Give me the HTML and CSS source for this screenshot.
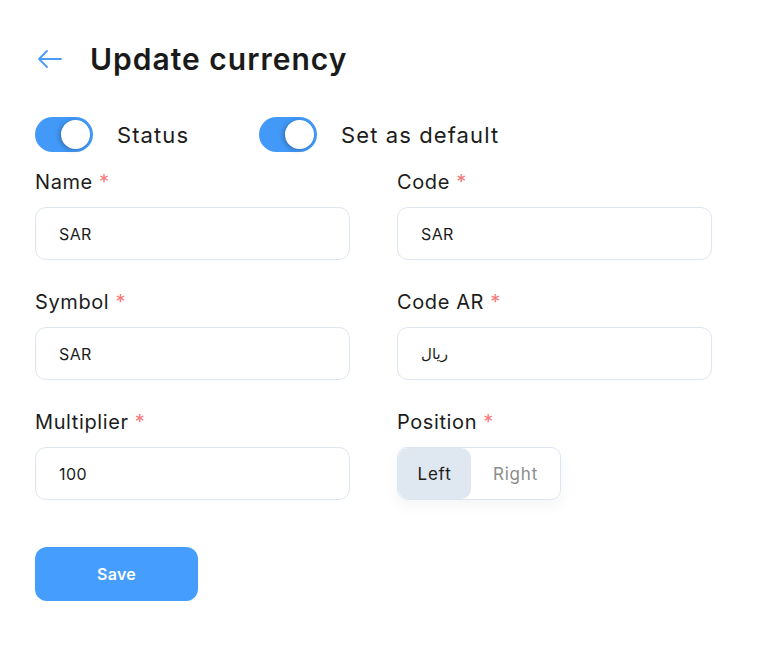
FILE: index.html
```html
<!DOCTYPE html>
<html>
<head>
<meta charset="utf-8">
<link rel="stylesheet" href="styles.css">
</head>
<body>
<div class="page">
  <div class="header">
    <svg class="back" width="26" height="20" viewBox="0 0 26 20"><path d="M24 10H2M10 2L2 10l8 8" fill="none" stroke="#4a9cf6" stroke-width="1.8" stroke-linecap="round" stroke-linejoin="round"/></svg>
    <h1 class="title">Update currency</h1>
  </div>
  <div class="toggles">
    <div class="toggle-item"><span class="switch"><span class="knob"></span></span><span class="toggle-label">Status</span></div>
    <div class="toggle-item"><span class="switch"><span class="knob"></span></span><span class="toggle-label">Set as default</span></div>
  </div>
  <div class="grid">
    <div class="field"><label class="label">Name <span class="req">*</span></label><div class="input">SAR</div></div>
    <div class="field"><label class="label">Code <span class="req">*</span></label><div class="input">SAR</div></div>
    <div class="field"><label class="label">Symbol <span class="req">*</span></label><div class="input">SAR</div></div>
    <div class="field"><label class="label">Code AR <span class="req">*</span></label><div class="input arabic">ريال</div></div>
    <div class="field"><label class="label">Multiplier <span class="req">*</span></label><div class="input">100</div></div>
    <div class="field"><label class="label">Position <span class="req">*</span></label>
      <div class="segment"><span class="seg active">Left</span><span class="seg">Right</span></div>
    </div>
  </div>
  <button class="save">Save</button>
</div>
</body>
</html>
```
FILE: styles.css
```css
* { box-sizing: border-box; }
body { margin: 0; background: #fff; font-family: "Inter", "Noto Sans", sans-serif; color: #1c1c1c; }
.page { padding: 41px 35px 0 35px; width: 784px; }
.header { display: flex; align-items: center; height: 36px; }
.back { margin-left: 2px; margin-right: 27px; }
.title { margin: 0; font-size: 30px; font-weight: 600; line-height: 36px; letter-spacing: 1px; color: #1a1a1a; }
.toggles { display: flex; gap: 0; margin-top: 40px; height: 35px; }
.toggle-item { display: flex; align-items: center; width: 224px; }
.switch { width: 58px; height: 35px; border-radius: 18px; background: #4299f7; position: relative; display: inline-block; flex: none; }
.knob { position: absolute; right: 3px; top: 3px; width: 29px; height: 29px; border-radius: 50%; background: #fff; box-shadow: -2px 1px 4px rgba(0,0,0,0.25); }
.toggle-label { margin-left: 24px; font-size: 22px; font-weight: 400; letter-spacing: 1.1px; white-space: nowrap; }
.grid { display: grid; grid-template-columns: 315px 315px; column-gap: 47px; row-gap: 30px; margin-top: 18px; }
.field { display: flex; flex-direction: column; }
.label { font-size: 20px; line-height: 24px; margin-bottom: 13px; letter-spacing: 0.6px; color: #1c1c1c; }
.req { color: #f57a7a; }
.input { height: 53px; border: 1px solid #dde6f0; border-radius: 11px; padding-left: 23px; display: flex; align-items: center; font-size: 16px; letter-spacing: 0.4px; color: #1c1c1c; }
.arabic { font-family: "DejaVu Sans", sans-serif; font-size: 15px; letter-spacing: 0; }
.segment { display: flex; width: 164px; height: 53px; border: 1px solid #dde6f0; border-radius: 10px; box-shadow: 0 6px 14px rgba(60,80,120,0.06); overflow: hidden; }
.seg { display: flex; align-items: center; justify-content: center; font-size: 17px; letter-spacing: 0.8px; color: #8c8c8c; flex: 1; }
.seg.active { flex: 0 0 73px; background: #dfe7f0; color: #1c1c1c; border-radius: 10px; }
.save { margin-top: 47px; width: 163px; height: 54px; border: none; border-radius: 12px; background: #459efe; color: #fff; font-family: inherit; font-size: 16px; font-weight: 600; letter-spacing: 0.3px; }
```
